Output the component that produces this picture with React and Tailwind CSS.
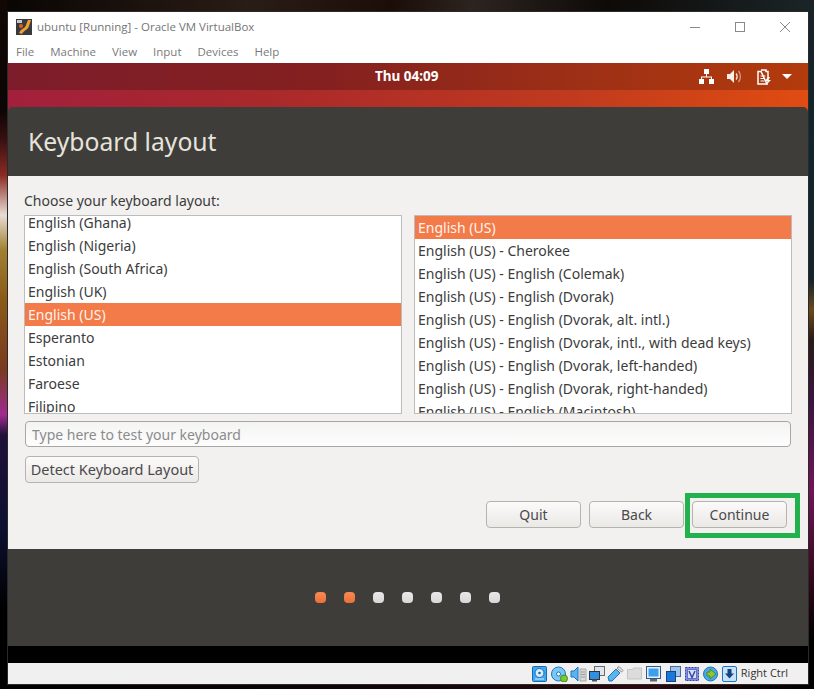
const leftLayouts = [
  "English (Ghana)",
  "English (Nigeria)",
  "English (South Africa)",
  "English (UK)",
  "English (US)",
  "Esperanto",
  "Estonian",
  "Faroese",
  "Filipino",
];

const rightLayouts = [
  "English (US)",
  "English (US) - Cherokee",
  "English (US) - English (Colemak)",
  "English (US) - English (Dvorak)",
  "English (US) - English (Dvorak, alt. intl.)",
  "English (US) - English (Dvorak, intl., with dead keys)",
  "English (US) - English (Dvorak, left-handed)",
  "English (US) - English (Dvorak, right-handed)",
  "English (US) - English (Macintosh)",
];

const menuItems = ["File", "Machine", "View", "Input", "Devices", "Help"];
const dots = [true, true, false, false, false, false, false];

function LayoutList({ items, selected, offset }) {
  return (
    <div className="h-[199px] w-[378px] overflow-hidden border border-[#bcbcbc] bg-white">
      <div className={offset}>
        {items.map((item) => (
          <div
            key={item}
            className={`h-[23px] whitespace-nowrap pl-[3px] text-[14px] leading-[23px] ${
              item === selected ? "bg-[#f37a49] text-[#fff3ec]" : "text-[#3c3c3c]"
            }`}
          >
            {item}
          </div>
        ))}
      </div>
    </div>
  );
}

function GtkButton({ children, className }) {
  return (
    <button
      className={`h-[27px] rounded-[4px] border border-[#b5b3ae] bg-[linear-gradient(180deg,#fbfafa,#ebe9e6)] text-[#4a4a4a] ${className}`}
    >
      {children}
    </button>
  );
}

function VboxLogo() {
  return (
    <svg width="16" height="16" viewBox="0 0 16 16">
      <rect width="16" height="16" fill="#3a3a3e" />
      <path d="M1 1h5v3H1z" fill="#c9c9c9" />
      <path d="M3 14c2-5 6-4 7-8l2-5h3l-2 6c-1 4-5 4-7 8z" fill="#f0a030" />
      <circle cx="5" cy="7" r="2" fill="#d8641c" />
    </svg>
  );
}

function PanelIcons() {
  return (
    <div className="flex items-center">
      <svg width="15" height="15" viewBox="0 0 15 15" fill="#fff">
        <rect x="5" y="0" width="5" height="5" />
        <rect x="0" y="10" width="5" height="5" />
        <rect x="10" y="10" width="5" height="5" />
        <path d="M7 5h1v2.500h5V10h-1V8.500H3V10H2V7.500h5z" />
      </svg>
      <svg className="ml-[13px]" width="15" height="15" viewBox="0 0 15 15">
        <path d="M0 5h3l4-4v13l-4-4H0z" fill="#f4f0ec" />
        <path d="M9 4.500c1.500 1.500 1.500 4.500 0 6" fill="none" stroke="#f4f0ec" strokeWidth="1.300" />
        <path d="M11.500 2c2.500 3 2.500 8 0 11" fill="none" stroke="#d99a80" strokeWidth="1.300" />
      </svg>
      <svg className="ml-[15px]" width="15" height="16" viewBox="0 0 15 16">
        <path d="M4 1h5v1.500h2V9M10 15H1V2.500h3z" fill="none" stroke="#fff" strokeWidth="1.500" />
        <path d="M3.500 7h5M3.500 9.500h4M3.500 12h4" stroke="#fff" strokeWidth="1.200" />
        <path d="M11 8l-3 4h2.500L9 16l5-5h-2.500l1.500-3z" fill="#fff" />
      </svg>
      <div className="ml-[10px] h-0 w-0 border-x-[5px] border-t-[5px] border-x-transparent border-t-white" />
    </div>
  );
}

function StatusIcons() {
  return (
    <div className="flex items-center">
      {/* hard disk */}
      <svg width="15" height="16" viewBox="0 0 15 16">
        <rect x="0.500" y="0.500" width="14" height="15" rx="1" fill="#3fa9f0" stroke="#1668b8" />
        <circle cx="7.500" cy="7" r="4.500" fill="#d8eefc" stroke="#1668b8" />
        <circle cx="7.500" cy="7" r="1.300" fill="#1668b8" />
        <path d="M3 13h9" stroke="#d8eefc" />
      </svg>
      {/* optical */}
      <svg className="ml-[4px]" width="17" height="16" viewBox="0 0 17 16">
        <circle cx="7.500" cy="8" r="7" fill="#7cc8f4" stroke="#1b75c4" />
        <circle cx="7.500" cy="8" r="2" fill="#fff" stroke="#1b75c4" />
        <circle cx="13" cy="12.500" r="3.500" fill="#7cc832" stroke="#3f8f12" />
      </svg>
      {/* audio */}
      <svg className="ml-[2px]" width="17" height="16" viewBox="0 0 17 16">
        <path d="M1 5h3l4-4v14l-4-4H1z" fill="#5ab4ee" stroke="#1b75c4" />
        <path d="M10 3h6v12h-6z" fill="#d8d8d8" stroke="#a8a8a8" />
        <path d="M11 6h4M11 8.500h4M11 11h4" stroke="#9a9a9a" />
      </svg>
      {/* network */}
      <svg className="ml-[2px]" width="16" height="16" viewBox="0 0 16 16">
        <rect x="5.500" y="0.500" width="10" height="9" fill="#dfe6ee" stroke="#6a6a6a" />
        <rect x="0.500" y="5.500" width="10" height="8" fill="#2d8fe6" stroke="#333" />
        <rect x="3" y="13.500" width="5" height="2" fill="#555" />
      </svg>
      {/* usb */}
      <svg className="ml-[2px]" width="17" height="16" viewBox="0 0 17 16">
        <path d="M1 11L9 3l4 4-8 8H2z" fill="#5ab4ee" stroke="#1b75c4" />
        <path d="M10 2l2-1.500 4 4L14.500 6z" fill="#e8e8e8" stroke="#8a8a8a" />
      </svg>
      {/* shared folders, greyed out */}
      <svg className="ml-[3px]" width="15" height="15" viewBox="0 0 15 15">
        <path d="M0.500 3.500h5l1-1.500h8v11h-14z" fill="#dcdcdc" stroke="#c4c4c4" />
      </svg>
      {/* display */}
      <svg className="ml-[4px]" width="15" height="16" viewBox="0 0 15 16">
        <rect x="0.500" y="0.500" width="14" height="12" fill="#e8eef4" stroke="#2a5a8c" />
        <rect x="2.500" y="2.500" width="10" height="8" fill="#3aa0ec" />
        <rect x="4" y="13" width="7" height="2.500" fill="#666" />
      </svg>
      {/* capture */}
      <svg className="ml-[5px]" width="15" height="16" viewBox="0 0 15 16">
        <rect x="4.500" y="0.500" width="10" height="10" fill="#9cc4ec" stroke="#4a6a9a" />
        <rect x="0.500" y="5.500" width="9" height="10" fill="#1b78d8" stroke="#14457e" />
      </svg>
      {/* VT-x */}
      <svg className="ml-[4px]" width="14" height="14" viewBox="0 0 14 14">
        <rect x="0.500" y="0.500" width="13" height="13" fill="#7d8fe4" stroke="#3f3fa0" strokeDasharray="2 1" />
        <rect x="2.500" y="2.500" width="9" height="9" fill="#d6def8" stroke="#6272c8" />
        <path d="M4 4l3 6.500L10 4" fill="none" stroke="#2f3fa8" strokeWidth="1.400" />
      </svg>
      {/* additions */}
      <svg className="ml-[4px]" width="16" height="16" viewBox="0 0 16 16">
        <circle cx="7.500" cy="8" r="7" fill="#4aa8e8" stroke="#1b75c4" />
        <path d="M7 3l6 5-6 5V10H4V6h3z" fill="#8cc63f" stroke="#4f8a1a" />
      </svg>
      {/* host key arrow */}
      <svg className="ml-[3px]" width="15" height="16" viewBox="0 0 15 16">
        <rect x="0.500" y="0.500" width="14" height="15" rx="1.500" fill="#c8e2f8" stroke="#1b75c4" />
        <path d="M5.500 3h4v4.500H12L7.500 12.500 3 7.500h2.500z" fill="#14457e" />
      </svg>
    </div>
  );
}

export default function App() {
  return (
    <div className="flex h-[689px] w-[814px] overflow-hidden bg-black font-['Noto_Sans',sans-serif]">
      <div className="h-full w-[7px] bg-[linear-gradient(180deg,#120805_0px,#0c0505_110px,#3a1012_140px,#8a2a22_175px,#e8dcd4_215px,#a08030_250px,#8a5a18_300px,#7a3a20_370px,#a02a90_415px,#20103a_435px,#0c1030_530px,#000_610px)]" />
      <div className="flex w-[802px] flex-col">
        <div className="h-[11px] bg-[linear-gradient(90deg,#0a0604,#2a1c16_30%,#1c0d08_48%,#2c2420_58%,#0e0a08_75%,#1a2426)]" />
        <div className="flex h-[674px] flex-col border border-[#2a2a2a]">
          <div className="flex h-[28px] items-center bg-white pl-[8px] pr-[18px] pt-[2px] font-['Open_Sans',sans-serif] text-[11.500px] text-[#757575]">
            <VboxLogo />
            <span className="ml-[5px]">ubuntu [Running] - Oracle VM VirtualBox</span>
            <div className="ml-auto flex items-center gap-[35px]">
              <div className="h-px w-[10px] bg-[#8a8a8a]" />
              <div className="h-[10px] w-[10px] border border-[#8a8a8a]" />
              <svg width="10" height="10" viewBox="0 0 10 10" stroke="#8a8a8a">
                <path d="M0 0l10 10M10 0L0 10" />
              </svg>
            </div>
          </div>
          <div className="flex h-[23px] items-center gap-[16px] bg-white pb-[2px] pl-[8px] pt-[3px] font-['Open_Sans',sans-serif] text-[11.500px] text-[#7a7a7a]">
            {menuItems.map((item) => (
              <span key={item}>{item}</span>
            ))}
          </div>

          <div className="relative flex h-[27px] items-center justify-end bg-[linear-gradient(90deg,#7d1d2b,#84201f_40%,#9c2f16_70%,#b33b0c)] pr-[16px]">
            <span className="absolute left-[367px] text-[13.500px] font-bold text-white">Thu 04:09</span>
            <PanelIcons />
          </div>

          <div className="bg-[linear-gradient(90deg,#a2203c,#a8282c_30%,#bf3a1e_70%,#e04c12)] pt-[17px]">
            <div className="flex h-[69px] items-center rounded-t-[5px] bg-[#3e3d39] pl-[20px] text-[24.700px] text-[#e6e3dc]">
              Keyboard layout
            </div>
          </div>

          <div className="flex h-[373px] flex-col bg-[#f2f1ef] px-[16px]">
            <div className="mt-[15px] h-[20px] text-[14px] leading-[20px] text-[#3c3c3c]">
              Choose your keyboard layout:
            </div>
            <div className="mt-[4px] flex gap-[12px]">
              <LayoutList items={leftLayouts} selected="English (US)" offset="-mt-[5px]" />
              <LayoutList items={rightLayouts} selected="English (US)" offset="" />
            </div>
            <input
              readOnly
              placeholder="Type here to test your keyboard"
              className="ml-px mt-[7px] h-[26px] w-[766px] rounded-[4px] border border-[#a8a6a2] bg-[linear-gradient(180deg,#f4f4f3,#fdfdfd)] px-[6px] text-[14px] placeholder:text-[#8c8c8c]"
            />
            <GtkButton className="ml-px mt-[9px] w-[174px] text-[14.500px]">Detect Keyboard Layout</GtkButton>
            <div className="mr-[5px] mt-[18px] flex justify-end gap-[8px]">
              <GtkButton className="w-[95px] text-[14px]">Quit</GtkButton>
              <GtkButton className="w-[95px] text-[14px]">Back</GtkButton>
              <div className="relative">
                <GtkButton className="w-[95px] text-[14px]">Continue</GtkButton>
                <div className="absolute left-[-7px] top-[-8px] h-[45px] w-[115px] border-[5px] border-[#22b14c]" />
              </div>
            </div>
          </div>

          <div className="flex h-[97px] items-center justify-center gap-[18px] bg-[#3e3d39] pr-[2px]">
            {dots.map((active, i) => (
              <div
                key={i}
                className={`h-[11px] w-[11px] rounded-[4px] ${
                  active
                    ? "bg-[linear-gradient(180deg,#f58a55,#ee7036)]"
                    : "bg-[linear-gradient(180deg,#e8e8e8,#d8d8d8)]"
                }`}
              />
            ))}
          </div>
          <div className="h-[17px] bg-black" />
          <div className="flex h-[21px] items-center justify-end bg-[#f0f0f0] pr-[20px] font-['Open_Sans',sans-serif] text-[11px] text-[#333]">
            <StatusIcons />
            <span className="ml-[4px]">Right Ctrl</span>
          </div>
        </div>
        <div className="flex-1 bg-[linear-gradient(90deg,#000,#120508_50%,#2a0a10_80%,#000)]" />
      </div>
      <div className="h-full w-[5px] bg-[linear-gradient(180deg,#1a2228_0px,#10262e_150px,#14232c_280px,#6a4a1c_310px,#2a1a18_340px,#3a1440_400px,#701458_490px,#3a0a20_570px,#000_640px)]" />
    </div>
  );
}
